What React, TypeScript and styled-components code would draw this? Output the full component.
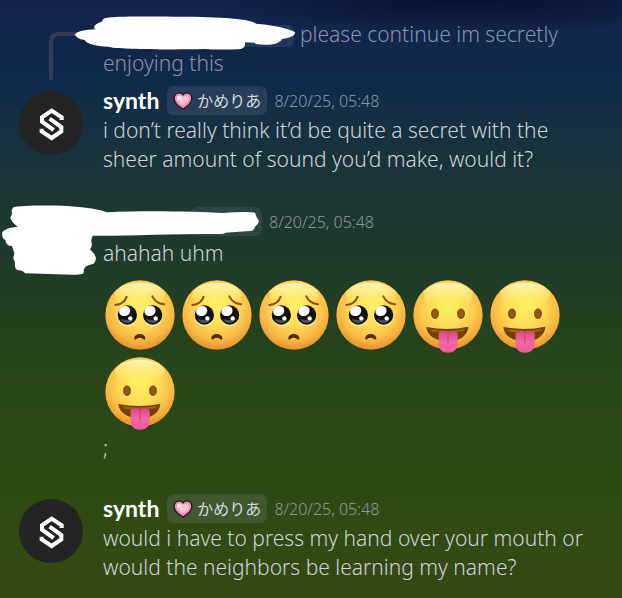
import React from "react";
import styled, { createGlobalStyle } from "styled-components";

const GlobalStyle = createGlobalStyle`
  * { box-sizing: border-box; }
  html { min-height: 100%; background: #374713; }
  body {
    margin: 0;
    font-family: "Noto Sans", "Noto Sans CJK JP", sans-serif;
    font-weight: 300;
  }
`;

const Chat = styled.main`
  min-height: 100vh;
  padding: 20px 32px 16px 19px;
  background:
    radial-gradient(ellipse 260px 34px at 75% 0, rgba(5, 12, 36, 0.75), transparent),
    linear-gradient(
      #15214d 0%, #12254c 5%, #0e2a4a 14%, #152f42 20%, #1a3338 28%,
      #1e3830 37%, #203b28 46%, #26421c 56%, #2a4716 67%, #2d4a12 80%,
      #324a12 91%, #374713 100%
    );
`;

const Message = styled.article<{ $gap: number }>`
  display: grid;
  grid-template-columns: 64px minmax(0, 1fr);
  column-gap: 20px;
  margin-top: ${(p) => p.$gap}px;
`;

const Reply = styled.div`
  display: grid;
  grid-template-columns: 64px minmax(0, 1fr);
  column-gap: 20px;
`;

const Spine = styled.div`
  width: 34px;
  height: 48px;
  margin: 12px 0 -4px 30px;
  border: solid #383b4e;
  border-width: 4px 0 0 4px;
  border-radius: 9px 0 0 2px;
`;

const Text = styled.p<{ $muted?: boolean }>`
  margin: 0;
  font-size: 21px;
  line-height: 29px;
  color: ${(p) => (p.$muted ? "#8b92a8" : "#ced4d8")};
`;

const Header = styled.header<{ $space?: number }>`
  display: flex;
  align-items: center;
  gap: 7px;
  height: 29px;
  margin-bottom: ${(p) => p.$space ?? 1}px;
`;

const Name = styled.h3`
  margin: 0 1px 0 0;
  font: 700 23px/29px Lato, sans-serif;
  color: #fff;
`;

const Tag = styled.span`
  display: flex;
  align-items: center;
  gap: 4px;
  height: 29px;
  padding: 0 6px;
  border-radius: 7px;
  background: rgba(165, 170, 200, 0.15);
  color: #d3d8df;
  font: 400 16px/29px "Noto Sans CJK JP", sans-serif;
`;

const Time = styled.time`
  padding-top: 2px;
  font-size: 16px;
  line-height: 29px;
  color: #8f97a2;
`;

const Avatar = styled.svg`
  width: 64px;
  height: 64px;
  margin-top: 5px;
`;

const HiddenTag = styled.span<{ $inline?: boolean }>`
  position: relative;
  display: inline-block;
  width: ${(p) => (p.$inline ? 191 : 159)}px;
  height: ${(p) => (p.$inline ? 22 : 29)}px;
  margin-right: ${(p) => (p.$inline ? 6 : 0)}px;
  vertical-align: ${(p) => (p.$inline ? "middle" : "baseline")};

  &::before {
    content: "";
    position: absolute;
    right: 0;
    top: 0;
    width: 72px;
    height: 100%;
    border-radius: 7px;
    background: rgba(165, 170, 200, 0.13);
  }
`;

const Scribble = styled.svg<{ $x: number; $y: number }>`
  position: absolute;
  left: ${(p) => p.$x}px;
  top: ${(p) => p.$y}px;
  fill: #fff;
`;

const Emojis = styled.div`
  display: flex;
  flex-wrap: wrap;
  gap: 7px;
  margin: 12px 0 7px 2px;

  svg { width: 70px; height: 70px; overflow: visible; }
`;

const Defs = styled.svg`
  display: block;
  width: 0;
  height: 0;
`;

const SynthAvatar = () => (
  <Avatar viewBox="0 0 192 192" role="img" aria-label="synth">
    <circle cx="96" cy="96" r="96" fill="#232324" />
    <g fill="none" stroke="#fff" strokeWidth="12" strokeLinejoin="miter">
      <path d="M128 87V79L98 59L69 79V92L104 117" />
      <path d="M68 113V121L98 141L127 121V108L92 83" />
    </g>
  </Avatar>
);

const Heart = () => (
  <svg width="20" height="18" viewBox="0 0 20 18" aria-hidden="true">
    <path
      fill="#f08fb4"
      stroke="#30192b"
      strokeWidth="1.4"
      d="M10 2.8C8-.2 1.200 0 1.200 6.500C1.200 10.800 6 14.800 10 17C14 14.800 18.800 10.800 18.800 6.500C18.800 0 12 -.2 10 2.800Z"
    />
    <path fill="#fbc0d3" d="M10 5C8.500 2.500 4 2.500 3.800 6.500C3.800 9.500 7 12 10 13.800C13 12 16 9.500 16 6.500C15.800 2.800 11.500 2.800 10 5Z" />
    <path fill="#ffeaf1" d="M4 4h3v1h1v2H6v1H4Z" />
  </svg>
);

const EmojiDefs = () => (
  <Defs aria-hidden="true">
    <defs>
      <radialGradient id="face" cx="0.5" cy="0.38" r="0.64">
        <stop offset="0" stopColor="#fff062" />
        <stop offset="0.45" stopColor="#fddb56" />
        <stop offset="0.78" stopColor="#f7b541" />
        <stop offset="1" stopColor="#e48a2a" />
      </radialGradient>
      <linearGradient id="shine" x2="0" y2="1">
        <stop offset="0" stopColor="#fffbd0" stopOpacity="0.85" />
        <stop offset="1" stopColor="#fff36a" stopOpacity="0" />
      </linearGradient>
      <linearGradient id="tongue" x2="0" y2="1">
        <stop offset="0" stopColor="#dc4885" />
        <stop offset="0.5" stopColor="#f467a8" />
        <stop offset="1" stopColor="#ee579b" />
      </linearGradient>
    </defs>
  </Defs>
);

const Face = () => (
  <>
    <circle cx="105" cy="105" r="104" fill="url(#face)" />
    <ellipse cx="105" cy="45" rx="74" ry="37" fill="url(#shine)" />
  </>
);

const Eye = ({ x }: { x: number }) => (
  <g>
    <circle cx={x} cy="108" r="31" fill="#fff0b8" opacity="0.75" />
    <circle cx={x} cy="105" r="29" fill="#15110f" />
    <path d={`M${x - 20} 117a22 22 0 0 0 39 0q-17 7 -39 0`} fill="#51504f" />
    <ellipse cx={x - 8} cy="93" rx="17" ry="15" fill="#fff" transform={`rotate(-20 ${x - 8} 93)`} />
    <circle cx={x + 9} cy="115" r="6.5" fill="#fff" />
  </g>
);

const Pleading = () => (
  <svg viewBox="0 0 210 210" role="img" aria-label="pleading face">
    <Face />
    <Eye x={67} />
    <Eye x={143} />
    <g fill="none" stroke="#8b5010" strokeWidth="6" strokeLinecap="round">
      <path d="M31 75Q57 73 65 50" />
      <path d="M177 73Q152 70 142 49" />
    </g>
    <path d="M88 176C87 158 121 157 121 176C121 180 117 179 113 176Q104 170 95 176C91 179 88 180 88 176Z" fill="#5b2910" />
  </svg>
);

const Tongue = () => (
  <svg viewBox="0 0 210 210" role="img" aria-label="face with tongue">
    <Face />
    <g fill="#925616" stroke="#74400f" strokeWidth="3">
      <ellipse cx="66" cy="101" rx="10" ry="14" />
      <ellipse cx="144" cy="101" rx="10" ry="14" />
    </g>
    <path d="M40 141Q105 153 166 140C165 165 142 184 105 184C67 184 42 166 40 141Z" fill="#744006" />
    <path d="M52 147Q105 157 155 146L151 154Q105 162 57 155Z" fill="#9a6111" />
    <path d="M77 158Q91 150 105 158Q119 150 134 158V191C134 208 122 218 105 218S77 208 77 191Z" fill="url(#tongue)" />
    <path d="M105 159V190" stroke="#cc3d7d" strokeWidth="3" strokeLinecap="round" />
  </svg>
);

const SynthHeader = () => (
  <Header>
    <Name>synth</Name>
    <Tag>
      <Heart />
      かめりあ
    </Tag>
    <Time dateTime="2025-08-20T05:48">8/20/25, 05:48</Time>
  </Header>
);

export default function App() {
  return (
    <>
      <GlobalStyle />
      <EmojiDefs />
      <Chat>
        <Reply>
          <Spine />
          <Text $muted>
            <HiddenTag $inline>
              <Scribble $x={-28} $y={-9} width="221" height="34" viewBox="225 48 663 102">
                <path d="M310 57C320 49 400 49 520 50C640 49 760 56 768 71C810 73 875 87 885 97Q887 111 846 117C837 134 805 137 767 132L765 128L735 127Q738 145 717 148Q650 150 615 147C500 150 340 147 325 140C285 139 258 130 254 120Q228 117 225 103Q235 90 287 88L282 84Q281 72 305 65Z" />
              </Scribble>
            </HiddenTag>
            please continue im secretly enjoying this
          </Text>
        </Reply>
        <Message $gap={8}>
          <SynthAvatar />
          <div>
            <SynthHeader />
            <Text>
              i don’t really think it’d be quite a secret with the sheer amount of sound you’d make, would it?
            </Text>
          </div>
        </Message>
        <Message $gap={33}>
          <div />
          <div>
            <Header $space={3}>
              <HiddenTag>
                <Scribble $x={-101} $y={-2} width="258" height="70" viewBox="6 45 774 210">
                  <path d="M40 52C60 45 180 46 210 49Q285 54 322 67C430 61 580 64 670 69Q745 63 765 68Q768 80 777 93Q774 105 765 110Q763 122 750 123L675 128Q674 133 650 132C500 132 380 138 278 137Q272 150 275 160Q277 171 270 178L281 190Q294 208 281 221Q267 224 258 229Q250 235 251 250Q245 255 220 254L75 250Q69 241 55 241Q42 238 45 217L40 205L43 190L36 168Q19 169 16 150Q4 144 7 126Q17 113 53 110Q32 95 31 82Q39 72 34 62Z" />
                </Scribble>
              </HiddenTag>
              <Time dateTime="2025-08-20T05:48">8/20/25, 05:48</Time>
            </Header>
            <Text>ahahah uhm</Text>
            <Emojis>
              <Pleading />
              <Pleading />
              <Pleading />
              <Pleading />
              <Tongue />
              <Tongue />
              <Tongue />
            </Emojis>
            <Text>;</Text>
          </div>
        </Message>
        <Message $gap={31}>
          <SynthAvatar />
          <div>
            <SynthHeader />
            <Text>
              would i have to press my hand over your mouth or would the neighbors be learning my name?
            </Text>
          </div>
        </Message>
      </Chat>
    </>
  );
}
